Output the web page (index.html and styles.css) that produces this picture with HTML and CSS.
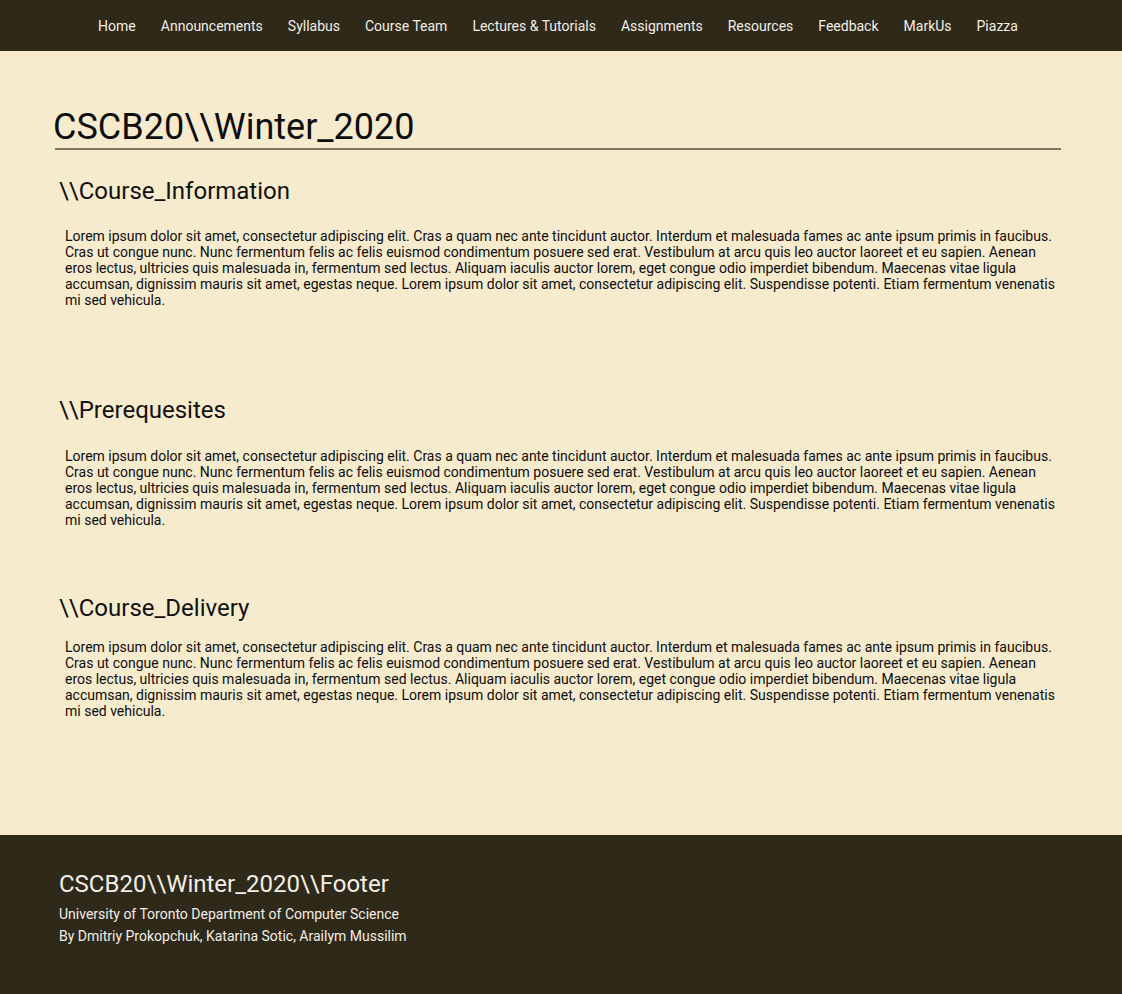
FILE: index.html
```html
<!DOCTYPE html>
<html lang="en">
<head>
<meta charset="utf-8">
<title>CSCB20 Winter 2020</title>
<link rel="stylesheet" href="styles.css">
</head>
<body>
<nav class="topnav">
  <a href="#">Home</a>
  <a href="#">Announcements</a>
  <a href="#">Syllabus</a>
  <a href="#">Course Team</a>
  <a href="#">Lectures &amp; Tutorials</a>
  <a href="#">Assignments</a>
  <a href="#">Resources</a>
  <a href="#">Feedback</a>
  <a href="#">MarkUs</a>
  <a href="#">Piazza</a>
</nav>
<main class="page">
  <div class="title-row">
    <h1 class="title">CSCB20\\Winter_2020</h1>
  </div>
  <section class="section section-info">
    <h2 class="section-title">\\Course_Information</h2>
    <p class="section-text">Lorem ipsum dolor sit amet, consectetur adipiscing elit. Cras a quam nec ante tincidunt auctor. Interdum et malesuada fames ac ante ipsum primis in faucibus. Cras ut congue nunc. Nunc fermentum felis ac felis euismod condimentum posuere sed erat. Vestibulum at arcu quis leo auctor laoreet et eu sapien. Aenean eros lectus, ultricies quis malesuada in, fermentum sed lectus. Aliquam iaculis auctor lorem, eget congue odio imperdiet bibendum. Maecenas vitae ligula accumsan, dignissim mauris sit amet, egestas neque. Lorem ipsum dolor sit amet, consectetur adipiscing elit. Suspendisse potenti. Etiam fermentum venenatis mi sed vehicula.</p>
  </section>
  <section class="section section-prereq">
    <h2 class="section-title">\\Prerequesites</h2>
    <p class="section-text">Lorem ipsum dolor sit amet, consectetur adipiscing elit. Cras a quam nec ante tincidunt auctor. Interdum et malesuada fames ac ante ipsum primis in faucibus. Cras ut congue nunc. Nunc fermentum felis ac felis euismod condimentum posuere sed erat. Vestibulum at arcu quis leo auctor laoreet et eu sapien. Aenean eros lectus, ultricies quis malesuada in, fermentum sed lectus. Aliquam iaculis auctor lorem, eget congue odio imperdiet bibendum. Maecenas vitae ligula accumsan, dignissim mauris sit amet, egestas neque. Lorem ipsum dolor sit amet, consectetur adipiscing elit. Suspendisse potenti. Etiam fermentum venenatis mi sed vehicula.</p>
  </section>
  <section class="section section-delivery">
    <h2 class="section-title">\\Course_Delivery</h2>
    <p class="section-text">Lorem ipsum dolor sit amet, consectetur adipiscing elit. Cras a quam nec ante tincidunt auctor. Interdum et malesuada fames ac ante ipsum primis in faucibus. Cras ut congue nunc. Nunc fermentum felis ac felis euismod condimentum posuere sed erat. Vestibulum at arcu quis leo auctor laoreet et eu sapien. Aenean eros lectus, ultricies quis malesuada in, fermentum sed lectus. Aliquam iaculis auctor lorem, eget congue odio imperdiet bibendum. Maecenas vitae ligula accumsan, dignissim mauris sit amet, egestas neque. Lorem ipsum dolor sit amet, consectetur adipiscing elit. Suspendisse potenti. Etiam fermentum venenatis mi sed vehicula.</p>
  </section>
</main>
<footer class="footer">
  <h3 class="footer-title">CSCB20\\Winter_2020\\Footer</h3>
  <p class="footer-line">University of Toronto Department of Computer Science</p>
  <p class="footer-line">By Dmitriy Prokopchuk, Katarina Sotic, Arailym Mussilim</p>
</footer>
</body>
</html>
```
FILE: styles.css
```css
* {
  box-sizing: border-box;
}

html, body {
  margin: 0;
  padding: 0;
}

body {
  background: #f7ebcd;
  font-family: Roboto, "Liberation Sans", sans-serif;
  color: #111;
}

.topnav {
  height: 51px;
  background: #2f291a;
  display: flex;
  justify-content: center;
  align-items: center;
  gap: 25px;
  padding-right: 6px;
}

.topnav a {
  color: #f2eee4;
  text-decoration: none;
  font-size: 14px;
}

.page {
  padding: 55px 61px 116px 55px;
}

.title-row {
  border-bottom: 2px solid #7f7762;
}

.title {
  margin: 0 0 0 -2px;
  font-size: 36px;
  font-weight: 400;
  line-height: 42px;
  color: #0d0d0d;
}

.section-title {
  margin: 0 0 0 4px;
  font-size: 24px;
  font-weight: 400;
  line-height: 28px;
  color: #111;
}

.section-text {
  margin: 0 0 0 10px;
  font-size: 14px;
  line-height: 16px;
  color: #0d0d0d;
}

.section-info {
  padding-top: 27px;
}
.section-info .section-title {
  margin-bottom: 23px;
}

.section-prereq {
  padding-top: 88px;
}
.section-prereq .section-title {
  margin-bottom: 24px;
}

.section-delivery {
  padding-top: 66px;
}
.section-delivery .section-title {
  margin-bottom: 17px;
}

.footer {
  background: #2f291a;
  color: #f2eee4;
  padding: 35px 59px 40px 59px;
  min-height: 159px;
}

.footer-title {
  margin: 0 0 5px 0;
  font-size: 24px;
  font-weight: 400;
  line-height: 28px;
}

.footer-line {
  margin: 0;
  font-size: 14px;
  line-height: 22px;
}
```
